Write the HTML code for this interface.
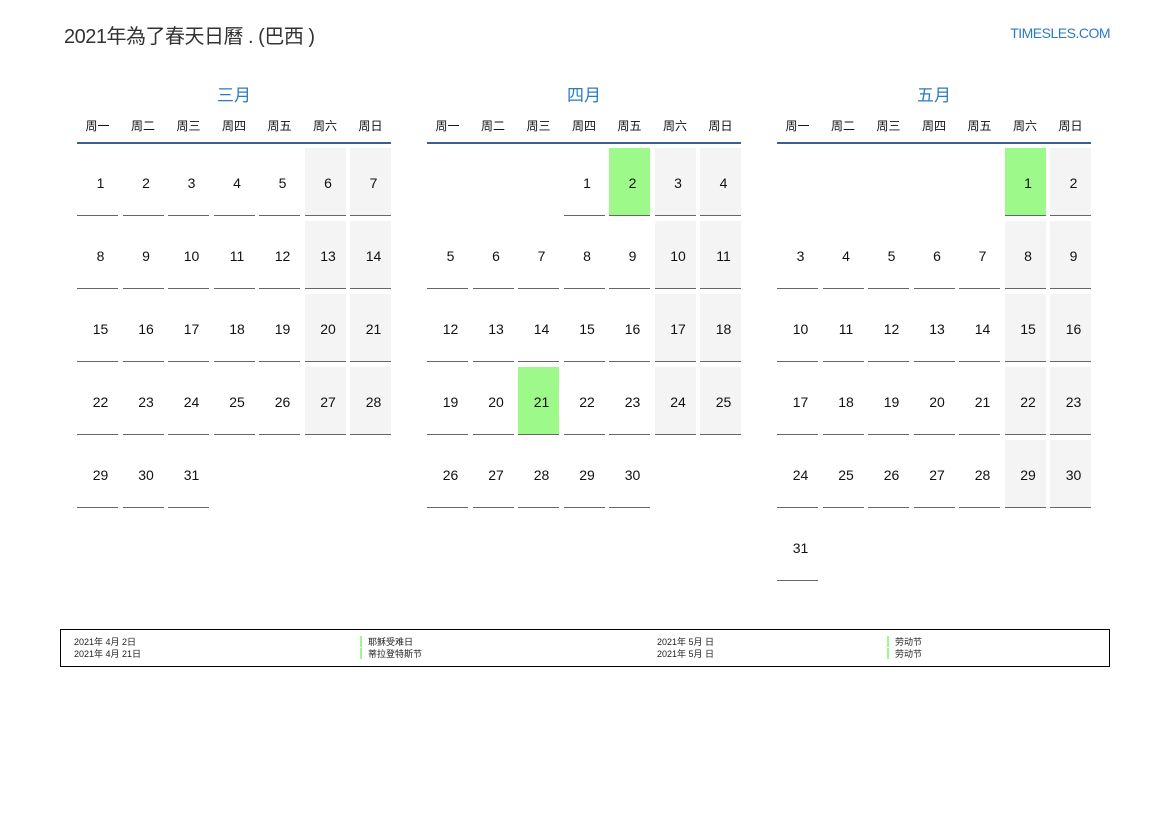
<!DOCTYPE html>
<html><head><meta charset="utf-8">
<style>
*{margin:0;padding:0;box-sizing:border-box}
body{width:1169px;height:827px;background:#fff;position:relative;font-family:"Liberation Sans","Noto Sans CJK SC",sans-serif;color:#111;overflow:hidden}
.title{position:absolute;left:64px;top:20px;font-size:20px;color:#333;letter-spacing:-0.5px}
.site{position:absolute;right:59px;top:25px;font-size:14px;color:#2a7bc4;letter-spacing:-0.5px}
.month{position:absolute;top:84px;width:314px}
.mname{text-align:center;font-size:17px;color:#2a7bc4;height:26px;line-height:24px}
.wd{display:grid;grid-template-columns:repeat(7,41px);column-gap:4.5px;font-size:12px;height:34px;line-height:32px;text-align:center;border-bottom:2px solid #3d5f8c}
.grid{display:grid;grid-template-columns:repeat(7,41px);column-gap:4.5px;row-gap:5px;grid-auto-rows:68px;margin-top:4px}
.grid div.d{border-bottom:1.5px solid #666;display:flex;align-items:center;justify-content:center;font-size:14px;padding-left:6px;padding-top:2px}
.grid div.w{background:#f4f4f4}
.grid div.h{background:#9dfa8a}
.legend{position:absolute;left:60px;top:629px;width:1050px;height:38px;border:1px solid #000;font-size:9px;color:#222;line-height:12px}
.legend span{position:absolute}
.bar{position:absolute;width:2px;height:11px;background:#9dfa8a}
</style></head><body>
<div class="title">2021年為了春天日曆 . (巴西 )</div>
<div class="site">TIMESLES.COM</div>

<div class="month" style="left:77px">
<div class="mname">三月</div>
<div class="wd"><span>周一</span><span>周二</span><span>周三</span><span>周四</span><span>周五</span><span>周六</span><span>周日</span></div>
<div class="grid">
<div class="d">1</div><div class="d">2</div><div class="d">3</div><div class="d">4</div><div class="d">5</div><div class="d w">6</div><div class="d w">7</div>
<div class="d">8</div><div class="d">9</div><div class="d">10</div><div class="d">11</div><div class="d">12</div><div class="d w">13</div><div class="d w">14</div>
<div class="d">15</div><div class="d">16</div><div class="d">17</div><div class="d">18</div><div class="d">19</div><div class="d w">20</div><div class="d w">21</div>
<div class="d">22</div><div class="d">23</div><div class="d">24</div><div class="d">25</div><div class="d">26</div><div class="d w">27</div><div class="d w">28</div>
<div class="d">29</div><div class="d">30</div><div class="d">31</div>
</div></div>

<div class="month" style="left:427px">
<div class="mname">四月</div>
<div class="wd"><span>周一</span><span>周二</span><span>周三</span><span>周四</span><span>周五</span><span>周六</span><span>周日</span></div>
<div class="grid">
<div></div><div></div><div></div><div class="d">1</div><div class="d h">2</div><div class="d w">3</div><div class="d w">4</div>
<div class="d">5</div><div class="d">6</div><div class="d">7</div><div class="d">8</div><div class="d">9</div><div class="d w">10</div><div class="d w">11</div>
<div class="d">12</div><div class="d">13</div><div class="d">14</div><div class="d">15</div><div class="d">16</div><div class="d w">17</div><div class="d w">18</div>
<div class="d">19</div><div class="d">20</div><div class="d h">21</div><div class="d">22</div><div class="d">23</div><div class="d w">24</div><div class="d w">25</div>
<div class="d">26</div><div class="d">27</div><div class="d">28</div><div class="d">29</div><div class="d">30</div>
</div></div>

<div class="month" style="left:777px">
<div class="mname">五月</div>
<div class="wd"><span>周一</span><span>周二</span><span>周三</span><span>周四</span><span>周五</span><span>周六</span><span>周日</span></div>
<div class="grid">
<div></div><div></div><div></div><div></div><div></div><div class="d h">1</div><div class="d w">2</div>
<div class="d">3</div><div class="d">4</div><div class="d">5</div><div class="d">6</div><div class="d">7</div><div class="d w">8</div><div class="d w">9</div>
<div class="d">10</div><div class="d">11</div><div class="d">12</div><div class="d">13</div><div class="d">14</div><div class="d w">15</div><div class="d w">16</div>
<div class="d">17</div><div class="d">18</div><div class="d">19</div><div class="d">20</div><div class="d">21</div><div class="d w">22</div><div class="d w">23</div>
<div class="d">24</div><div class="d">25</div><div class="d">26</div><div class="d">27</div><div class="d">28</div><div class="d w">29</div><div class="d w">30</div>
<div class="d">31</div>
</div></div>

<div class="legend">
<span style="left:13px;top:6px">2021年 4月 2日</span>
<span style="left:13px;top:18px">2021年 4月 21日</span>
<div class="bar" style="left:299px;top:6px"></div><div class="bar" style="left:299px;top:18px"></div>
<span style="left:307px;top:6px">耶稣受难日</span>
<span style="left:307px;top:18px">蒂拉登特斯节</span>
<span style="left:596px;top:6px">2021年 5月 日</span>
<span style="left:596px;top:18px">2021年 5月 日</span>
<div class="bar" style="left:826px;top:6px"></div><div class="bar" style="left:826px;top:18px"></div>
<span style="left:834px;top:6px">劳动节</span>
<span style="left:834px;top:18px">劳动节</span>
</div>
</body></html>
